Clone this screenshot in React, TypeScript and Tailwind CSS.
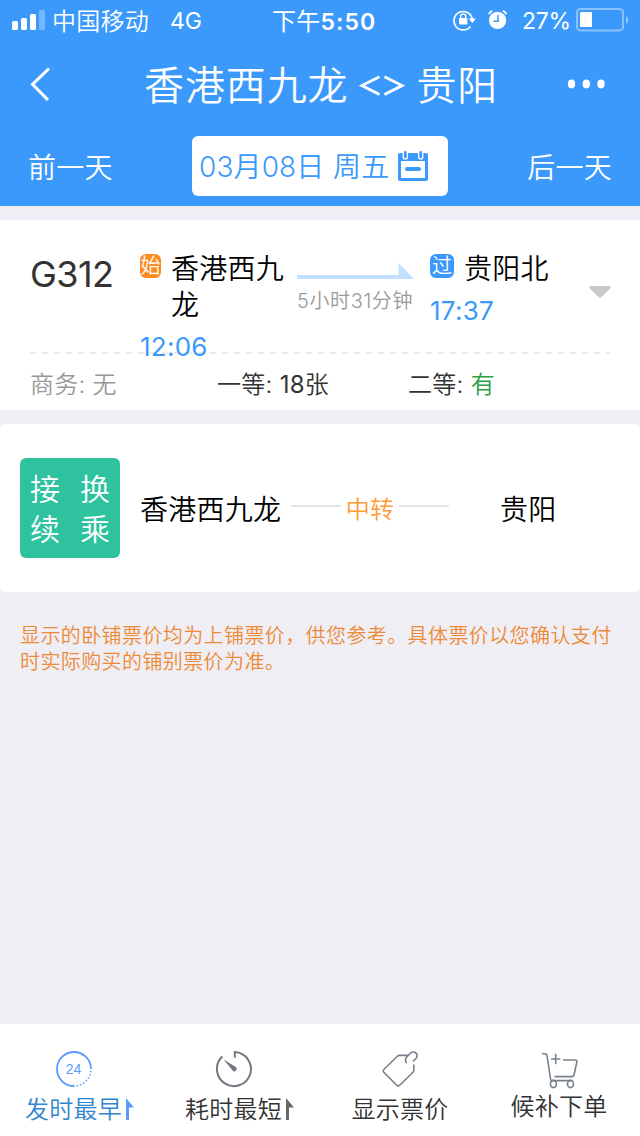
import React from 'react';
import clsx from 'clsx';

interface StationProps {
  badge: string;
  badgeClass: string;
  name: string;
  time: string;
}

interface TabItem {
  label: string;
  icon: React.ReactNode;
  labelClass: string;
  marker?: string;
}

const SignalIcon = () => (
  <svg width="34" height="22" viewBox="0 0 34 22" fill="#fff">
    <rect x="0" y="12" width="6" height="9" rx="1.5" />
    <rect x="9" y="9" width="6" height="12" rx="1.5" />
    <rect x="18" y="5" width="6" height="16" rx="1.5" />
    <rect x="27" y="1" width="6" height="20" rx="1.5" opacity="0.3" />
  </svg>
);

const RotationLockIcon = () => (
  <svg width="23" height="22" viewBox="0 0 23 22" fill="none">
    <path d="M17.4 17.4 A9.2 9.2 0 1 1 19.2 10" stroke="#fff" strokeWidth="1.6" />
    <path d="M15.6 9.6 H23 L19.3 14 Z" fill="#fff" />
    <rect x="6" y="9" width="8.4" height="6.4" rx="0.8" fill="#fff" />
    <path d="M7.7 9.5 V7.4 A2.5 2.5 0 0 1 12.7 7.4 V9.5" stroke="#fff" strokeWidth="1.4" />
  </svg>
);

const AlarmIcon = () => (
  <svg width="20" height="20" viewBox="0 0 20 20" fill="none">
    <circle cx="9.6" cy="10.3" r="8.6" fill="#fff" />
    <path d="M0.8 4.2 A6 6 0 0 1 4.3 0.9 M14.9 0.9 A6 6 0 0 1 18.4 4.2" stroke="#fff" strokeWidth="1.8" />
    <path d="M10 5 V11.2 H5.6" stroke="#3b99fc" strokeWidth="1.5" />
  </svg>
);

const BatteryIcon = () => (
  <svg width="54" height="24" viewBox="0 0 54 24" fill="none">
    <rect x="1" y="1" width="46" height="21.4" rx="3.5" stroke="#fff" strokeOpacity="0.4" strokeWidth="2" />
    <rect x="4" y="4" width="12" height="15" rx="1" fill="#fff" />
    <path d="M50 8 A4.6 4.6 0 0 1 50 16 Z" fill="#fff" fillOpacity="0.45" />
  </svg>
);

const CalendarIcon = () => (
  <svg className="-mt-px" width="30" height="31" viewBox="0 0 30 31" fill="none">
    <path d="M2 3 H28 A2 2 0 0 1 30 5 V29 A2 2 0 0 1 28 31 H2 A2 2 0 0 1 0 29 V5 A2 2 0 0 1 2 3 Z M3 11 V28 H27 V11 Z" fill="#3b99fc" fillRule="evenodd" />
    <path d="M7.3 3 V7 M22.7 3 V7" stroke="#fff" strokeWidth="5.4" strokeLinecap="round" />
    <path d="M7.3 2.4 V7 M22.7 2.4 V7" stroke="#3b99fc" strokeWidth="2.8" strokeLinecap="round" />
    <path d="M9 19 H21" stroke="#3b99fc" strokeWidth="4" strokeLinecap="round" />
  </svg>
);

const DepartureIcon = () => (
  <svg width="38" height="38" viewBox="0 0 38 38" fill="none">
    <path d="M19 36 A17 17 0 1 1 36 19" stroke="#5b9bff" strokeWidth="1.8" />
    <path d="M36 19 A17 17 0 0 1 19 36" stroke="#5b9bff" strokeWidth="1.6" strokeDasharray="1.4 2" strokeDashoffset="-2" />
    <text x="18.5" y="24" textAnchor="middle" fontSize="14" fill="#5b9bff" className="font-['Liberation_Sans',sans-serif] font-normal tracking-normal">
      24
    </text>
  </svg>
);

const DurationIcon = () => (
  <svg width="38" height="38" viewBox="0 0 38 38" fill="none">
    <path d="M19.8 7.8 V2.1 A17 17 0 1 1 7.4 6.6" stroke="#727981" strokeWidth="2" />
    <path d="M8.6 9.4 L20 16.5 A2.5 2.5 0 1 1 16.8 19.6 Z" fill="#727981" />
  </svg>
);

const PriceTagIcon = () => (
  <svg width="38" height="38" viewBox="0 0 38 38" fill="none" stroke="#77818c" strokeWidth="1.6" strokeLinecap="round" strokeLinejoin="round">
    <path d="M27 5.4 H18.3 Q17.2 5.4 16.4 6.2 L2.8 19.5 Q1.6 20.9 2.8 22.3 L15.7 35.2 Q17.2 36.6 18.7 35.2 L32.2 22 Q32.8 21.2 32.8 20.4 V15" />
    <path d="M25.4 12.7 C24 10.8 24.2 8.6 26 6.6 L29.3 3.2 C31.1 1.5 33.6 1.6 35 3.1 C36.5 4.7 36.3 7 34.7 8.7 L32.4 11" />
  </svg>
);

const CartIcon = () => (
  <svg className="mt-px -mb-px" width="38" height="38" viewBox="0 0 38 38" fill="none" stroke="#77818c" strokeWidth="1.6" strokeLinecap="round" strokeLinejoin="round">
    <path d="M1.5 2.8 H4 Q5.7 2.8 6 4.5 L9.7 28.8 Q9.8 29.6 10.8 29.6 H31" />
    <path d="M22.6 9 H34 Q36.3 9 35.8 11.2 L33 24 Q32.6 25.6 31 25.6 H14" />
    <path d="M14.7 3.2 V12.6 M10.6 8 H18.8" />
    <ellipse cx="12.4" cy="33" rx="3" ry="3.6" />
    <ellipse cx="29.5" cy="33" rx="3" ry="3.6" />
  </svg>
);

const Station: React.FC<StationProps> = ({ badge, badgeClass, name, time }) => (
  <div className="w-[157px]">
    <div className="flex items-start">
      <span className={clsx('mt-1 h-6 shrink-0 rounded-md text-center text-[20px] leading-[25px] tracking-normal text-white', badgeClass)}>
        {badge}
      </span>
      <span className="mt-px -mb-px w-[116px] text-[28px] leading-9 break-all whitespace-normal text-black">{name}</span>
    </div>
    <div className="mt-2.5 text-[26px] leading-[30px] font-normal tracking-[0.01em] text-[#3b99fc]">{time}</div>
  </div>
);

const TABS: TabItem[] = [
  { label: '发时最早', icon: <DepartureIcon />, labelClass: 'text-[#2f86cf]', marker: '#5b9bff' },
  { label: '耗时最短', icon: <DurationIcon />, labelClass: 'text-[#333]', marker: '#666' },
  { label: '显示票价', icon: <PriceTagIcon />, labelClass: 'text-[#333]' },
  { label: '候补下单', icon: <CartIcon />, labelClass: 'text-[#333] -mt-[3px] -ml-0.5' },
];

export default function App() {
  return (
    <div className="flex h-[1136px] w-[640px] flex-col overflow-hidden bg-[#efeef4] font-['Inter','Noto_Sans_CJK_SC',sans-serif] font-[350] tracking-[0.017em] whitespace-nowrap">
      <header className="h-[206px] bg-[#3b99fc] text-white">
        {/* Status bar */}
        <div className="flex h-10 items-center pl-3 text-[24px] leading-10">
          <SignalIcon />
          <span className="mt-[3px] ml-[6px] w-[118px]">中国移动</span>
          <span className="mt-0.5 w-[102px] text-[23px] font-normal tracking-normal">4G</span>
          <span className="mt-[3px] w-[181px] font-normal">
            下午<span className="text-[23px] font-semibold tracking-[0.045em]">5:50</span>
          </span>
          <RotationLockIcon />
          <span className="ml-3 w-[34px]">
            <AlarmIcon />
          </span>
          <span className="mt-0.5 w-[54px] text-[23px] font-normal tracking-[-0.01em]">27%</span>
          <BatteryIcon />
        </div>

        {/* Title */}
        <div className="flex h-[88px] items-center pl-[29px]">
          <svg width="24" height="36" viewBox="0 0 24 36" fill="none">
            <path d="M20 2.5 L3.5 18.3 L19 34" stroke="#fff" strokeWidth="3" />
          </svg>
          <h1 className="mt-[3px] ml-[91px] flex w-[422px] text-[40px] leading-[88px] tracking-[0.022em]">
            香港西九龙
            <svg className="mx-[11px] mt-[30px]" width="46" height="30" viewBox="0 0 46 30" fill="none" stroke="#fff" strokeWidth="2.8">
              <path d="M20.5 4.8 L3 13.6 L20.5 22.4 M25.5 4.8 L43 13.6 L25.5 22.4" />
            </svg>
            贵阳
          </h1>
          <svg width="40" height="10" viewBox="0 0 40 10" fill="#fff">
            <ellipse cx="5.5" cy="5" rx="3.7" ry="4.4" />
            <ellipse cx="20.3" cy="5" rx="3.7" ry="4.4" />
            <ellipse cx="35" cy="5" rx="3.7" ry="4.4" />
          </svg>
        </div>

        {/* Date picker */}
        <div className="flex h-[76px] items-center justify-between px-7 text-[28px] leading-[60px]">
          <button className="mt-[3px] w-[164px] text-left">前一天</button>
          <button className="flex h-[60px] w-64 items-center rounded-md bg-white pl-[7px] text-left text-[#3b99fc]">
            <span className="mt-0.5 w-[134px] tracking-[0.005em]">03月08日</span>
            <span className="mt-0.5 w-[65px]">周五</span>
            <CalendarIcon />
          </button>
          <button className="mt-[3px] w-[164px] text-right">后一天</button>
        </div>
      </header>

      {/* Direct train */}
      <section className="mt-[14px] h-[190px] shrink-0 bg-white">
        <div className="flex h-[132px] pt-[30px] pl-[30px]">
          <div className="mt-[6px] w-[110px] text-[36px] leading-9 font-normal tracking-[-0.015em] text-[#333]">G312</div>
          <Station badge="始" badgeClass="w-[21px] mr-[10px] bg-[#ff8a1f]" name="香港西九龙" time="12:06" />
          <div className="w-[133px]">
            <svg className="mt-[13px]" width="117" height="16" viewBox="0 0 117 16">
              <path d="M0 12 H101.5 V0 L117 16 H0 Z" fill="#c4e0ff" />
            </svg>
            <div className="mt-2 text-[20px] leading-7 tracking-[0.03em] text-[#999]">5小时31分钟</div>
          </div>
          <Station badge="过" badgeClass="w-6 mr-[10px] bg-[#3b99fc]" name="贵阳北" time="17:37" />
          <svg className="mt-9 ml-[2px] shrink-0" width="22" height="12" viewBox="0 0 22 12">
            <path d="M1.5 0 H20.5 Q22.5 0.8 21 2.4 L12.5 11 Q11 12.6 9.5 11 L1 2.4 Q-0.5 0.8 1.5 0 Z" fill="#c8c8c8" />
          </svg>
        </div>
        <div className="mx-[30px] h-0.5 bg-[repeating-linear-gradient(90deg,#ececec_0_6px,transparent_6px_12px)]" />
        <div className="flex pt-px pl-[30px] text-[24px] leading-[60px] text-[#333]">
          <span className="w-[187px] text-[#999]">商务: 无</span>
          <span className="w-[191px]">
            一等: <span className="font-normal">18</span>张
          </span>
          <span>
            二等: <span className="text-[#2e9e3e]">有</span>
          </span>
        </div>
      </section>

      {/* Transfer */}
      <section className="mt-[14px] flex h-[168px] shrink-0 items-center rounded-md bg-white pl-5 text-[28px] text-black">
        <div className="grid h-[100px] w-[100px] grid-cols-2 content-center rounded-md bg-[#2ec29f] pt-0.5 text-center text-[30px] leading-10 tracking-normal text-white">
          <span>接</span>
          <span>换</span>
          <span>续</span>
          <span>乘</span>
        </div>
        <span className="mt-[3px] ml-5 w-[151px]">香港西九龙</span>
        <span className="mb-1 h-0.5 w-[50px] bg-[#e5e5e5]" />
        <span className="mt-[3px] w-[58px] text-center text-[24px] text-[#ff9a33]">中转</span>
        <span className="mb-1 h-0.5 w-[50px] bg-[#e5e5e5]" />
        <span className="mt-[3px] ml-[51px]">贵阳</span>
      </section>

      <p className="px-5 pt-[31px] text-[20px] leading-[26px] tracking-[0.02em] text-[#ee8a35]">
        显示的卧铺票价均为上铺票价，供您参考。具体票价以您确认支付
        <br />
        时实际购买的铺别票价为准。
      </p>

      {/* Sort tabs */}
      <nav className="mt-auto grid h-28 grid-cols-4 bg-white pt-[26px]">
        {TABS.map(({ label, icon, labelClass, marker }) => (
          <button key={label} className="flex flex-col items-center">
            <span className={marker ? '-ml-3' : ''}>{icon}</span>
            <span className={clsx('flex items-center text-[24px] leading-[44px]', labelClass)}>
              {label}
              {marker && (
                <svg className="-mt-0.5 ml-1" width="9" height="22" viewBox="0 0 9 22" fill={marker}>
                  <path d="M0 0 L8 9.5 H3 V22 H0 Z" />
                </svg>
              )}
            </span>
          </button>
        ))}
      </nav>
    </div>
  );
}
